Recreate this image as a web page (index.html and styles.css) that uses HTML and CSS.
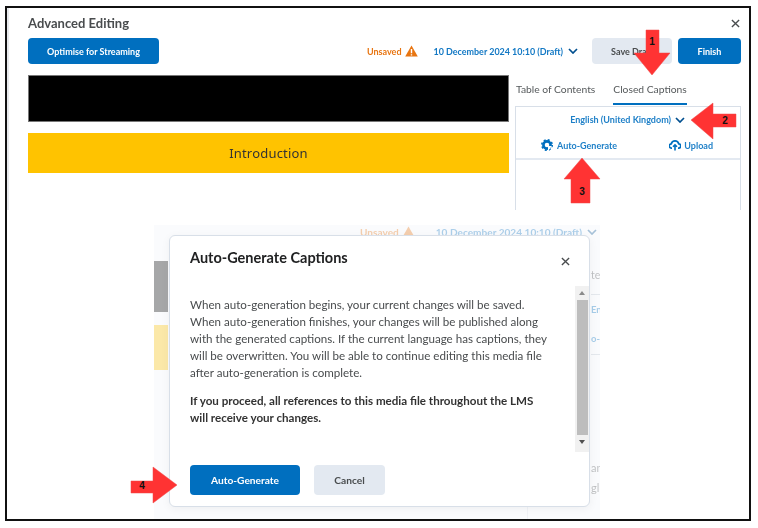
FILE: index.html
```html
<!DOCTYPE html>
<html lang="en">
<head>
<meta charset="utf-8">
<title>Advanced Editing</title>
<link rel="stylesheet" href="styles.css">
</head>
<body>
<div class="page">
  <div class="frame">
    <section class="editor">
      <header class="editor-head">
        <h1 class="editor-title">Advanced Editing</h1>
        <svg class="x-icon" viewBox="0 0 10 10"><path d="M1 1l8 8M9 1l-8 8"/></svg>
      </header>
      <div class="toolbar">
        <button class="btn btn-primary btn-optimise">Optimise for Streaming</button>
        <span class="unsaved">Unsaved
          <svg class="warn" viewBox="0 0 13 12"><path d="M6.5.5L12.8 11.6H.2z" fill="#e87511"/><path d="M6.5 4v4.2M6.5 9.2v1.2" stroke="#fff" stroke-width="1.4"/></svg>
        </span>
        <span class="draft">10 December 2024 10:10 (Draft)
          <svg class="chev" viewBox="0 0 10 6"><path d="M1 1l4 4 4-4"/></svg>
        </span>
        <button class="btn btn-secondary btn-save">Save Draft</button>
        <button class="btn btn-primary btn-finish">Finish</button>
      </div>
      <div class="workspace">
        <div class="stage">
          <div class="video"></div>
          <div class="chapter">Introduction</div>
        </div>
        <div class="side">
          <div class="tabs">
            <span class="tab">Table of Contents</span>
            <span class="tab tab-active">Closed Captions</span>
          </div>
          <div class="panel">
            <div class="lang">English (United Kingdom)
              <svg class="chev" viewBox="0 0 10 6"><path d="M1 1l4 4 4-4"/></svg>
            </div>
            <div class="actions">
              <span class="action">
                <svg class="act-icon" viewBox="0 0 12 12"><circle cx="6" cy="6" r="3.6" fill="none" stroke="#006fbf" stroke-width="2.6"/><circle cx="6" cy="6" r="5.2" fill="none" stroke="#006fbf" stroke-width="1.6" stroke-dasharray="2 2.1"/><path d="M7 12V7l4 0z" fill="#fff"/></svg>
                Auto-Generate
              </span>
              <span class="action action-upload">
                <svg class="act-icon" viewBox="0 0 12 12"><path d="M3 9.2H2.6a2.2 2.2 0 0 1-.3-4.4A3.8 3.8 0 0 1 9.7 4.8a2.2 2.2 0 0 1-.3 4.4H9" fill="none" stroke="#006fbf" stroke-width="1.7"/><path d="M6 11.5V6.5M4 7.8l2-2 2 2" fill="none" stroke="#006fbf" stroke-width="1.6"/></svg>
                Upload
              </span>
            </div>
          </div>
        </div>
      </div>
    </section>
    <section class="preview">
      <div class="backdrop">
        <div class="ghost">
          <div class="ghost-status">
            <span class="unsaved">Unsaved
              <svg class="warn" viewBox="0 0 13 12"><path d="M6.5.5L12.8 11.6H.2z" fill="#e87511"/></svg>
            </span>
            <span class="draft">10 December 2024 10:10 (Draft)
              <svg class="chev" viewBox="0 0 10 6"><path d="M1 1l4 4 4-4"/></svg>
            </span>
          </div>
          <div class="ghost-body">
            <div class="ghost-stage">
              <div class="video"></div>
              <div class="chapter"></div>
            </div>
            <div class="ghost-side">
              <div class="ghost-tab">te</div>
              <div class="ghost-lang">En</div>
              <div class="ghost-auto">o-</div>
              <div class="ghost-foot">an</div>
              <div class="ghost-foot">gl</div>
            </div>
          </div>
          <span class="ghost-rule"></span>
        </div>
        <div class="dialog">
          <div class="dialog-head">
            <h2 class="dialog-title">Auto-Generate Captions</h2>
            <svg class="x-icon" viewBox="0 0 10 10"><path d="M1 1l8 8M9 1l-8 8"/></svg>
          </div>
          <div class="dialog-main">
            <div class="dialog-text">
              <p>When auto-generation begins, your current changes will be saved. When auto-generation finishes, your changes will be published along with the generated captions. If the current language has captions, they will be overwritten. You will be able to continue editing this media file after auto-generation is complete.</p>
              <p class="strong">If you proceed, all references to this media file throughout the LMS will receive your changes.</p>
            </div>
            <div class="scrollbar">
              <span class="tri tri-up"></span>
              <span class="thumb"></span>
              <span class="tri tri-down"></span>
            </div>
          </div>
          <div class="dialog-foot">
            <button class="btn btn-primary btn-generate">Auto-Generate</button>
            <button class="btn btn-secondary btn-cancel">Cancel</button>
          </div>
        </div>
      </div>
    </section>
  </div>
  <svg class="annotations" viewBox="0 0 758 528">
    <polygon class="arrow" points="646,30 659,30 659,53 670,53 652,75 634,53 646,53"/>
    <text class="num" x="652" y="45">1</text>
    <polygon class="arrow" points="736,114 736,127 713,127 713,139 691,120 713,103 713,114"/>
    <text class="num" x="725" y="124">2</text>
    <polygon class="arrow" points="582,158 600,179 590,179 590,203 571,203 571,179 564,179"/>
    <text class="num" x="582" y="195">3</text>
    <polygon class="arrow" points="131,481 153,481 153,467 177,485 153,503 153,493 131,493"/>
    <text class="num" x="142" y="489">4</text>
  </svg>
</div>
</body>
</html>
```
FILE: styles.css
```css
* { box-sizing: border-box; }
html, body { margin: 0; padding: 0; background: #fff; }
body { font-family: Lato, "Noto Sans", sans-serif; color: #494c4e; overflow: hidden; }
.page { position: relative; width: 758px; height: 528px; padding: 6px 7px 7px 5px; }
.frame { height: 515px; border: 2px solid #111; background: #fff; filter: blur(0.45px); overflow: hidden; }

.editor { height: 202px; padding: 0 8px 0 19px; border-left: 2px solid #e8eaed; }
.editor-head { height: 30px; display: flex; justify-content: space-between; align-items: center; padding: 0 1px 0 0; }
.editor-title { margin: 0; font-size: 13px; font-weight: 700; color: #494c4e; }
.x-icon { width: 9px; height: 9px; fill: none; stroke: #494c4e; stroke-width: 1.5; }

.btn { border: 0; border-radius: 4px; font-family: inherit; font-weight: 700; font-size: 9px; height: 26px; padding: 0; }
.btn-primary { background: #006fbf; color: #fff; }
.btn-secondary { background: #e3e9f1; color: #494c4e; }
.toolbar { display: flex; align-items: center; height: 26px; }
.btn-optimise { width: 131px; }
.btn-save { width: 80px; margin-left: 14px; }
.btn-finish { width: 63px; margin-left: 6px; }
.unsaved { display: inline-flex; align-items: center; gap: 3px; color: #e87511; font-size: 9px; font-weight: 700; margin-left: auto; }
.warn { width: 13px; height: 12px; }
.draft { display: inline-flex; align-items: center; gap: 5px; color: #1278c4; font-size: 8.95px; font-weight: 700; margin-left: 16px; }
.chev { width: 10px; height: 6px; fill: none; stroke: #004f8f; stroke-width: 1.7; }

.workspace { display: flex; gap: 6px; margin-top: 11px; }
.stage { width: 481px; }
.video { height: 47px; background: #000; border: 1px solid #777; }
.chapter { height: 40px; margin-top: 11px; background: #ffc300; font-family: "Noto Sans", sans-serif; font-size: 13px; letter-spacing: 0.2px; color: #333; display: flex; align-items: center; justify-content: center; }
.side { width: 226px; }
.tabs { height: 31px; display: flex; gap: 18px; padding-left: 1px; }
.tab { font-size: 10.3px; color: #565a5c; padding-top: 8px; height: 30px; }
.tab-active { border-bottom: 2px solid #006fbf; height: 30px; }
.panel { height: 104px; border: 1px solid #d8dfe8; border-bottom: 0; }
.lang { height: 25px; display: flex; justify-content: flex-end; align-items: center; gap: 4px; padding: 0 55px 0 0; color: #1f80c8; font-size: 9px; font-weight: 700; }
.actions { height: 28px; display: flex; align-items: center; padding: 0 27px 0 25px; border-bottom: 2px solid #e3e9f1; }
.action { display: inline-flex; align-items: center; gap: 4px; color: #1f80c8; font-size: 9px; font-weight: 700; }
.action-upload { margin-left: auto; gap: 3px; }
.act-icon { width: 12px; height: 12px; }

.preview { padding: 15px 0 0 147px; height: 309px; }
.backdrop { position: relative; width: 446px; height: 295px; background: #fafbfd; }
.ghost { height: 100%; opacity: 0.33; display: flex; flex-direction: column; }
.ghost-status { height: 14px; display: flex; justify-content: flex-end; align-items: center; padding-right: 3px; }
.ghost-status .unsaved, .ghost-status .draft { font-size: 10.1px; }
.ghost-status .draft { margin-left: 21px; }
.ghost-body { flex: 1; display: flex; justify-content: space-between; }
.ghost-stage { width: 14px; padding-top: 22px; }
.ghost-stage .video { height: 51px; border: 0; }
.ghost-stage .chapter { height: 45px; margin-top: 13px; }
.ghost-side { width: 9px; overflow: hidden; font-size: 10.5px; white-space: nowrap; }
.ghost-tab { margin-top: 30px; height: 26px; border-bottom: 1px solid #b8c2ce; }
.ghost-lang { margin-top: 9px; color: #006fbf; font-size: 9.5px; font-weight: 700; }
.ghost-auto { margin-top: 18px; height: 22px; color: #006fbf; font-size: 9.5px; font-weight: 700; border-bottom: 1px solid #b8c2ce; }
.ghost-foot { font-size: 11px; height: 20px; }
.ghost-auto + .ghost-foot { margin-top: 106px; }
.ghost-rule { position: absolute; left: 373px; bottom: 0; width: 1px; height: 14px; background: #dde2e9; }

.dialog { position: absolute; left: 15px; top: 10px; width: 421px; height: 272px; background: #fff; border: 1px solid #d8dfe8; border-radius: 6px; box-shadow: 0 2px 10px rgba(0, 0, 0, 0.05); }
.dialog-head { height: 50px; display: flex; justify-content: space-between; align-items: center; padding: 0 19px 0 20px; }
.dialog-title { margin: 0; font-size: 14.5px; font-weight: 700; color: #202122; padding-bottom: 7px; }
.dialog-main { display: flex; justify-content: space-between; height: 166px; }
.dialog-text { width: 360px; margin-left: 20px; font-size: 11.6px; line-height: 17px; color: #494c4e; padding-top: 10px; }
.dialog-text p { margin: 0 0 11px; }
.dialog-text .strong { font-weight: 700; color: #333; }
.scrollbar { width: 14px; height: 166px; background: #f1f1f1; display: flex; flex-direction: column; align-items: center; }
.thumb { width: 11px; height: 135px; background: #bdbdbd; }
.tri { width: 0; height: 0; border-left: 3px solid transparent; border-right: 3px solid transparent; margin: 5px 0; }
.tri-up { border-bottom: 4px solid #8a8a8a; }
.tri-down { border-top: 4px solid #505050; }
.dialog-foot { display: flex; gap: 14px; padding: 13px 0 0 20px; }
.btn-generate { width: 110px; height: 30px; font-size: 10.2px; }
.btn-cancel { width: 71px; height: 30px; font-size: 10.2px; }

.annotations { position: absolute; left: 0; top: 0; width: 758px; height: 528px; pointer-events: none; }
.arrow { fill: #ff3333; stroke: #ee4a4a; stroke-width: 0.5; }
.num { font-family: "Liberation Sans", sans-serif; font-size: 10px; font-weight: 700; fill: #111; text-anchor: middle; }
```
